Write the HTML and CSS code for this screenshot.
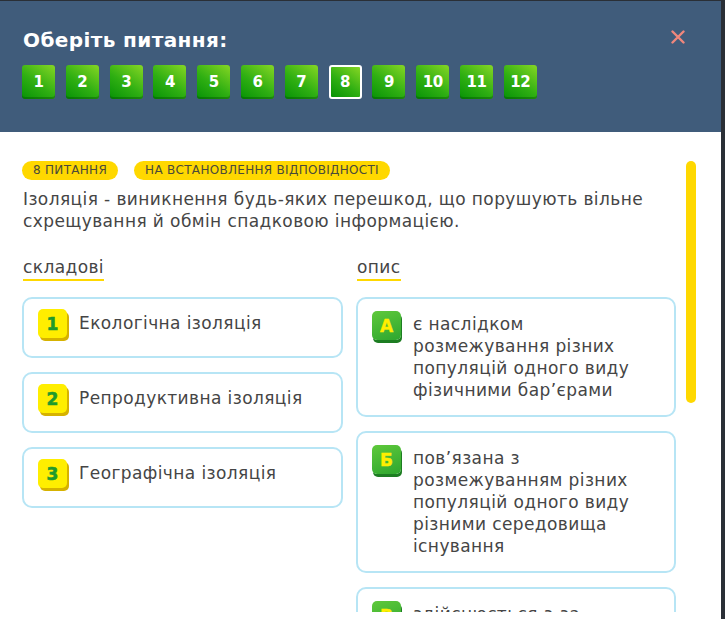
FILE: index.html
```html
<!DOCTYPE html>
<html lang="uk">
<head>
<meta charset="utf-8">
<title>Оберіть питання</title>
<link rel="stylesheet" href="styles.css">
</head>
<body>
<div class="modal">
  <header class="head">
    <div class="head-top">
      <h1 class="title">Оберіть питання:</h1>
      <button class="close" aria-label="Закрити">
        <svg width="14" height="14" viewBox="0 0 14 14"><path d="M1.5 1.5 L12.5 12.5 M12.5 1.5 L1.5 12.5" stroke="#f0877c" stroke-width="2.4" stroke-linecap="round"/></svg>
      </button>
    </div>
    <nav class="nums">
      <span class="num">1</span>
      <span class="num">2</span>
      <span class="num">3</span>
      <span class="num">4</span>
      <span class="num">5</span>
      <span class="num">6</span>
      <span class="num">7</span>
      <span class="num active">8</span>
      <span class="num">9</span>
      <span class="num">10</span>
      <span class="num">11</span>
      <span class="num">12</span>
    </nav>
  </header>
  <section class="content">
    <div class="main">
      <div class="tags">
        <span class="tag">8 питання</span>
        <span class="tag">на встановлення відповідності</span>
      </div>
      <p class="question">Ізоляція - виникнення будь-яких перешкод, що порушують вільне схрещування й обмін спадковою інформацією.</p>
      <div class="cols">
        <div class="col">
          <h2 class="col-title"><span>складові</span></h2>
          <div class="card"><span class="badge yellow">1</span><span class="ctext">Екологічна ізоляція</span></div>
          <div class="card"><span class="badge yellow">2</span><span class="ctext">Репродуктивна ізоляція</span></div>
          <div class="card"><span class="badge yellow">3</span><span class="ctext">Географічна ізоляція</span></div>
        </div>
        <div class="col">
          <h2 class="col-title"><span>опис</span></h2>
          <div class="card tall"><span class="badge green">А</span><span class="ctext">є наслідком розмежування різних популяцій одного виду фізичними бар’єрами</span></div>
          <div class="card tall"><span class="badge green">Б</span><span class="ctext">пов’язана з розмежуванням різних популяцій одного виду різними середовища існування</span></div>
          <div class="card tall"><span class="badge green">В</span><span class="ctext">здійснюється з-за відмінностей у будові статевих органів чи поведінці особин</span></div>
        </div>
      </div>
    </div>
    <div class="scroll"><div class="thumb"></div></div>
  </section>
</div>
</body>
</html>
```

FILE: styles.css
```css
* { box-sizing: border-box; }
html, body { margin: 0; padding: 0; }
body {
  background: #2a2f36;
  font-family: "DejaVu Sans", "Noto Sans", sans-serif;
  width: 725px;
  height: 619px;
  overflow: hidden;
}
.modal {
  width: 721px;
  height: 619px;
  margin-top: 1px;
  background: #fff;
  display: flex;
  flex-direction: column;
}
.head {
  background: #405c7b;
  height: 131px;
  padding: 26px 22px 0 22px;
  flex: none;
}
.head-top {
  display: flex;
  justify-content: space-between;
  align-items: flex-start;
}
.title {
  margin: 0;
  color: #fff;
  font-size: 20px;
  font-weight: bold;
  line-height: 26px;
  letter-spacing: 0.4px;
  padding-left: 1px;
}
.close {
  border: 0;
  background: none;
  padding: 0;
  margin: 3px 14px 0 0;
  width: 14px;
  height: 14px;
  display: flex;
}
.nums {
  display: flex;
  gap: 10.8px;
  margin-top: 12px;
}
.num {
  width: 33px;
  height: 34px;
  border-radius: 3px;
  background: linear-gradient(35deg, #079206 0%, #2faf12 45%, #86d624 100%);
  box-shadow: inset 0 -2px 0 rgba(0, 70, 0, 0.35);
  color: #fff;
  font-weight: bold;
  font-size: 15px;
  display: flex;
  align-items: center;
  justify-content: center;
  letter-spacing: -0.5px;
}
.num.active {
  border: 2px solid #fff;
  box-shadow: none;
}
.content {
  flex: 1;
  min-height: 0;
  overflow: hidden;
  display: flex;
  padding: 29px 0 0 22px;
  position: relative;
}
.content::after {
  content: "";
  position: absolute;
  left: 0;
  right: 0;
  bottom: 0;
  height: 8px;
  background: #fff;
}
.main {
  width: 654px;
  flex: none;
}
.tags {
  display: flex;
  gap: 16px;
}
.tag {
  background: #ffd800;
  border-radius: 10px;
  height: 19px;
  padding: 0 11px;
  font-size: 12px;
  line-height: 19px;
  text-transform: uppercase;
  color: #4a4a3a;
  letter-spacing: 0.3px;
}
.question {
  margin: 8px 0 0 0;
  font-size: 17px;
  line-height: 22px;
  letter-spacing: 0.4px;
  color: #454545;
  padding-left: 1px;
}
.cols {
  display: grid;
  grid-template-columns: 321px 320px;
  column-gap: 13px;
  margin-top: 24px;
}
.col {
  display: flex;
  flex-direction: column;
  gap: 14px;
}
.col-title {
  margin: 0;
  font-weight: normal;
  font-size: 17px;
  line-height: 22px;
  letter-spacing: 0.4px;
  color: #454545;
  height: 27px;
  padding-left: 1px;
}
.col-title span {
  display: inline-block;
  border-bottom: 2px solid #ffd800;
  padding-bottom: 1px;
}
.card {
  border: 2px solid #b7e5f5;
  border-radius: 10px;
  min-height: 61px;
  padding: 10px 12px 10px 14px;
  display: flex;
  align-items: flex-start;
  gap: 9px;
  color: #454545;
  font-size: 17px;
  line-height: 22px;
  letter-spacing: 0.4px;
}
.card.tall {
  padding-top: 12px;
  padding-bottom: 14px;
}
.ctext {
  padding-top: 3px;
}
.card.tall .ctext {
  padding-top: 2px;
  max-width: 235px;
}
.badge {
  flex: none;
  width: 29px;
  height: 29px;
  border-radius: 5px;
  display: flex;
  align-items: center;
  justify-content: center;
  font-weight: bold;
  font-size: 17px;
  letter-spacing: 0;
  margin-right: 3px;
}
.badge.yellow {
  background: #ffee00;
  color: #1f9a2c;
  box-shadow: 2px 3px 0 #d6b200;
  -webkit-text-stroke: 0.6px #1f9a2c;
}
.badge.green {
  background: linear-gradient(160deg, #5fc93b, #2ea62f);
  color: #ffee00;
  box-shadow: 1px 3px 0 #1d7d22;
  -webkit-text-stroke: 0.4px #ffee00;
}
.scroll {
  width: 10px;
  margin-left: 10px;
  flex: none;
}
.thumb {
  width: 10px;
  height: 242px;
  background: #ffd800;
  border-radius: 5px;
}
```
